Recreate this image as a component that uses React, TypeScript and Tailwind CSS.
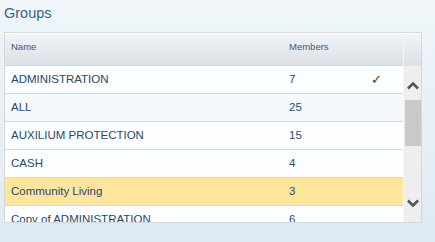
import React from 'react'

const GROUPS = [
    { name: 'ADMINISTRATION', members: 7, checked: true },
    { name: 'ALL', members: 25 },
    { name: 'AUXILIUM PROTECTION', members: 15 },
    { name: 'CASH', members: 4 },
    { name: 'Community Living', members: 3, selected: true },
    { name: 'Copy of ADMINISTRATION', members: 6 },
]

function Chevron({ down }: { down?: boolean }) {
    return (
        <svg width="12" height="8" viewBox="0 0 12 8">
            <path
                d={down ? 'M1 1.5 L6 6.5 L11 1.5' : 'M1 6.5 L6 1.5 L11 6.5'}
                fill="none"
                stroke="#555"
                strokeWidth="2.6"
            />
        </svg>
    )
}

export default function App() {
    return (
        <div className="w-[435px] h-[242px] overflow-hidden bg-gradient-to-b from-[#f0f6fa] to-[#deeaf3] font-['Liberation_Sans',Arial,sans-serif]">
            {/* Title */}
            <div className="h-[32px] pl-[4px] pt-[4px] text-[14.5px] leading-[18px] text-[#3b6188]">Groups</div>

            {/* Grid */}
            <div className="ml-[4px] w-[418px] h-[191px] border border-[#d5d8db] bg-white flex overflow-hidden">
                <div className="w-[398px] flex flex-col">
                    <div className="h-[33px] shrink-0 flex border-t border-white border-b border-b-[#c6dbe9] bg-gradient-to-b from-[#f0f3f7] to-[#dce1e6] text-[9.5px] leading-[12px] text-[#3d5a78]">
                        <div className="w-[278px] pl-[6px] pt-[7px]">Name</div>
                        <div className="w-[80px] pl-[6px] pt-[7px]">Members</div>
                        <div className="flex-1" />
                    </div>
                    {GROUPS.map((g, i) => (
                        <div
                            key={g.name}
                            className={
                                'h-[28px] shrink-0 flex items-center border-b border-[#c8dde9] text-[11.5px] text-[#2c4864] ' +
                                (g.selected ? 'bg-[#ffe59d]' : i === 1 ? 'bg-[#f5f9fc]' : 'bg-[#fdfeff]')
                            }
                        >
                            <div className="w-[278px] pl-[6px] whitespace-nowrap">{g.name}</div>
                            <div className="w-[80px] pl-[6px] text-[#2b4c6e]">{g.members}</div>
                            <div className="flex-1 pl-[8px] text-[#3a3a3a] font-['DejaVu_Sans',sans-serif] text-[13px] leading-[14px]">
                                {g.checked ? '✓' : ''}
                            </div>
                        </div>
                    ))}
                </div>

                {/* Scrollbar */}
                <div className="w-[18px] flex flex-col border-l border-[#f6f6f6]">
                    <div className="h-[33px] shrink-0 border-t border-white bg-gradient-to-b from-[#f0f3f7] to-[#dce1e6]" />
                    <div className="flex-1 flex flex-col bg-[#eeeeee]">
                        <div className="h-[34px] flex justify-center pt-[16px]">
                            <Chevron />
                        </div>
                        <div className="h-[46px] ml-[1px] bg-[#c9c9c9]" />
                        <div className="flex-1" />
                        <div className="h-[23px] flex justify-center">
                            <Chevron down />
                        </div>
                    </div>
                </div>
            </div>
        </div>
    )
}
